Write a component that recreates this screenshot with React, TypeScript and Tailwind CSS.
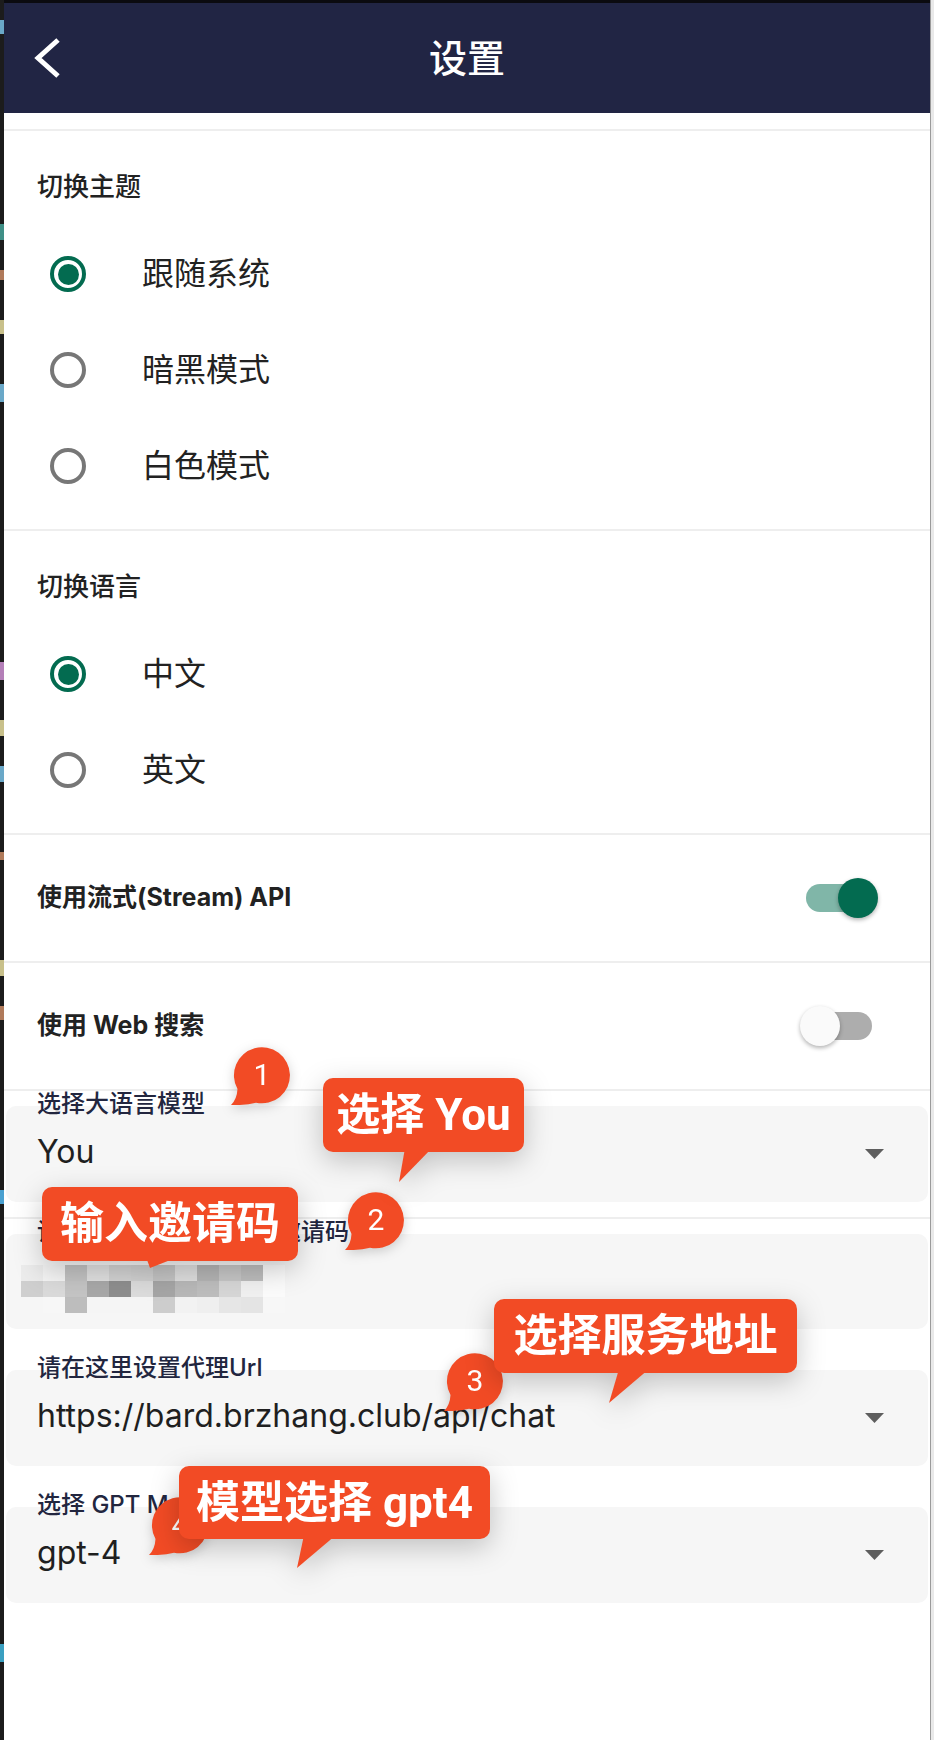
import React from "react";

function Radio({ checked }: { checked: boolean }) {
  return checked ? (
    <span className="flex h-[36px] w-[36px] shrink-0 items-center justify-center rounded-full border-[4.5px] border-[#036b50]">
      <span className="h-[21px] w-[21px] rounded-full bg-[#036b50]" />
    </span>
  ) : (
    <span className="h-[36px] w-[36px] shrink-0 rounded-full border-[4px] border-[#777777]" />
  );
}

function Sep() {
  return <div className="h-[2px] bg-[#eeeeee]" />;
}

function RadioSection({
  title,
  options,
}: {
  title: string;
  options: { label: string; checked: boolean }[];
}) {
  return (
    <section className="pt-[38px] pb-[15px]">
      <h2 className="h-[36px] pl-[33px] text-[26px] font-medium leading-[36px] text-[#222222]">
        {title}
      </h2>
      <div className="mt-[21px]">
        {options.map((o) => (
          <div key={o.label} className="flex h-[96px] items-center pl-[46px]">
            <Radio checked={o.checked} />
            <span className="ml-[56px] text-[32px] leading-none text-[#222222]">{o.label}</span>
          </div>
        ))}
      </div>
    </section>
  );
}

function Toggle({ on }: { on: boolean }) {
  return (
    <span
      className={`relative block h-[28px] w-[66px] rounded-full ${on ? "bg-[#80b6a8]" : "bg-[#adadad]"}`}
    >
      <span
        className={`absolute top-[-6px] h-[40px] w-[40px] rounded-full shadow-[0_2px_4px_rgba(0,0,0,0.3)] ${
          on ? "left-[32px] bg-[#036b50]" : "left-[-6px] bg-[#fafafa]"
        }`}
      />
    </span>
  );
}

function Arrow() {
  return (
    <svg width="19" height="10" viewBox="0 0 19 10" className="shrink-0">
      <polygon points="0,0 19,0 9.5,10" fill="#5e5e5e" />
    </svg>
  );
}

function FieldLabel({ children, className }: { children: React.ReactNode; className: string }) {
  return (
    <div
      className={`relative z-10 h-[26px] whitespace-nowrap pl-[33px] text-[24px] font-medium leading-[26px] text-[#22263f] ${className}`}
    >
      {children}
    </div>
  );
}

function SelectBox({ value }: { value: string }) {
  return (
    <div className="relative mx-[2px] -mt-[11px] flex h-[96px] items-center justify-between rounded-[10px] bg-[#f6f6f6] pl-[31px] pr-[44px]">
      <span className="pb-[4px] text-[32px] leading-none text-[#1f1f1f]">{value}</span>
      <Arrow />
    </div>
  );
}

const mosaic: string[][] = [
  ["bg-[#ececec]", "bg-[#f4f4f4]", "bg-[#c2c2c2]", "bg-[#e0e0e0]", "bg-[#d2d2d2]", "bg-[#d0d0d0]", "bg-[#c4c4c4]", "bg-[#dedede]", "bg-[#b4b4b4]", "bg-[#c6c6c6]", "bg-[#bdbdbd]", "bg-[#fbfbfb]"],
  ["bg-[#cfcfcf]", "bg-[#dadada]", "bg-[#c4c4c4]", "bg-[#a8a8a8]", "bg-[#8e8e8e]", "bg-[#dcdcdc]", "bg-[#a6a6a6]", "bg-[#b8b8b8]", "bg-[#bdbdbd]", "bg-[#d6d6d6]", "bg-[#f0f0f0]", "bg-[#fbfbfb]"],
  ["bg-[#f6f6f6]", "bg-[#f7f7f7]", "bg-[#bdbdbd]", "bg-[#f5f5f5]", "bg-[#f5f5f5]", "bg-[#f5f5f5]", "bg-[#cdcdcd]", "bg-[#f2f2f2]", "bg-[#efefef]", "bg-[#e6e6e6]", "bg-[#e4e4e4]", "bg-[#f7f7f7]"],
];

function Badge({ n, className }: { n: string; className: string }) {
  return (
    <div className={`absolute z-20 h-[58px] w-[60px] drop-shadow-[0_3px_6px_rgba(0,0,0,0.18)] ${className}`}>
      <svg width="60" height="58" viewBox="0 0 60 58" className="absolute left-0 top-0">
        <path
          d="M 7.5 42 Q 7 52 1 58 Q 16 58.5 26 55.7 A 28 28 0 1 0 7.5 42 Z"
          fill="#f24b25"
        />
      </svg>
      <div className="absolute left-[4px] top-0 flex h-[56px] w-[56px] items-center justify-center font-['Roboto',sans-serif] text-[30px] leading-none text-white">
        {n}
      </div>
    </div>
  );
}

function Callout({
  text,
  className,
  w,
  h,
  tail,
}: {
  text: string;
  className: string;
  w: number;
  h: number;
  tail: string;
}) {
  return (
    <div className={`absolute z-30 drop-shadow-[0_8px_14px_rgba(0,0,0,0.22)] ${className}`}>
      <svg width={w} height={h} viewBox={`0 0 ${w} ${h}`} className="absolute left-0 top-0 overflow-visible">
        <polygon points={tail} fill="#f24b25" />
      </svg>
      <div className="relative flex h-full w-full items-center justify-center rounded-[10px] bg-[#f24b25] font-['Roboto','Noto_Sans_CJK_SC',sans-serif] text-[44px] font-bold leading-none text-white">
        {text}
      </div>
    </div>
  );
}

export default function App() {
  return (
    <div className="relative flex h-[1740px] w-[934px] overflow-hidden bg-white font-['Inter','Noto_Sans_CJK_SC',sans-serif]">
      {/* left editor strip */}
      <div className="flex w-[4px] shrink-0 flex-col bg-[#1c1c1c]">
        <div className="mt-[20px] h-[14px] bg-[#6aa8c8]" />
        <div className="mt-[190px] h-[16px] bg-[#3f8f86]" />
        <div className="mt-[30px] h-[10px] bg-[#b07a5a]" />
        <div className="mt-[40px] h-[14px] bg-[#c8c08a]" />
        <div className="mt-[50px] h-[18px] bg-[#6aa8c8]" />
        <div className="mt-[260px] h-[18px] bg-[#b47fb8]" />
        <div className="mt-[40px] h-[16px] bg-[#c8c08a]" />
        <div className="mt-[30px] h-[16px] bg-[#6aa8c8]" />
        <div className="mt-[70px] h-[8px] bg-[#b07a5a]" />
        <div className="mt-[100px] h-[16px] bg-[#c8c08a]" />
        <div className="mt-[30px] h-[14px] bg-[#b07a5a]" />
        <div className="mt-[170px] h-[14px] bg-[#4aa0d0]" />
        <div className="mt-[440px] h-[18px] bg-[#3a9fc0]" />
      </div>

      {/* main column */}
      <div className="flex min-w-0 flex-1 flex-col">
        <div className="h-[3px] bg-[#0b0b10]" />
        <header className="grid h-[110px] grid-cols-[1fr_auto_1fr] items-center bg-[#212544]">
          <div className="pl-[29px]">
            <svg width="28" height="42" viewBox="0 0 28 42">
              <polyline points="25,3 5,21 25,39" fill="none" stroke="#ffffff" strokeWidth="5" />
            </svg>
          </div>
          <h1 className="text-[38px] font-medium leading-none text-white">设置</h1>
          <div />
        </header>
        <div className="h-[16px]" />
        <Sep />
        <RadioSection
          title="切换主题"
          options={[
            { label: "跟随系统", checked: true },
            { label: "暗黑模式", checked: false },
            { label: "白色模式", checked: false },
          ]}
        />
        <Sep />
        <RadioSection
          title="切换语言"
          options={[
            { label: "中文", checked: true },
            { label: "英文", checked: false },
          ]}
        />
        <Sep />
        <div className="flex h-[126px] items-center justify-between pl-[33px] pr-[58px]">
          <span className="text-[25px] font-bold text-[#222222]">使用流式(Stream) API</span>
          <Toggle on />
        </div>
        <Sep />
        <div className="flex h-[126px] items-center justify-between pl-[33px] pr-[58px]">
          <span className="text-[25px] font-bold text-[#222222]">使用 Web 搜索</span>
          <Toggle on={false} />
        </div>
        <Sep />

        <FieldLabel className="">选择大语言模型</FieldLabel>
        <SelectBox value="You" />

        <div className="mt-[15px]">
          <Sep />
        </div>
        <FieldLabel className="">请在这里输入你的访问邀请码</FieldLabel>
        <div className="relative mx-[2px] -mt-[11px] h-[95px] rounded-[10px] bg-[#f6f6f6] pl-[15px] pt-[31px]">
          <div className="grid w-[264px] grid-cols-12">
            {mosaic.map((row, r) =>
              row.map((c, i) => <div key={`${r}-${i}`} className={`h-[16px] ${c}`} />)
            )}
          </div>
        </div>

        <FieldLabel className="mt-[26px]">请在这里设置代理Url</FieldLabel>
        <SelectBox value="https://bard.brzhang.club/api/chat" />

        <FieldLabel className="mt-[26px]">选择 GPT Model</FieldLabel>
        <SelectBox value="gpt-4" />
      </div>

      {/* right window edge */}
      <div className="w-[4px] shrink-0 border-l border-[#9a9a9a] bg-[#e9e9e9]" />

      {/* annotation overlay */}
      <Badge n="1" className="left-[230px] top-[1047px]" />
      <Badge n="2" className="left-[344px] top-[1192px]" />
      <Badge n="3" className="left-[443px] top-[1353px]" />
      <Badge n="4" className="left-[148px] top-[1497px]" />

      <Callout
        text="选择 You"
        className="left-[323px] top-[1078px] h-[74px] w-[201px]"
        w={201}
        h={74}
        tail="82,70 109,70 76,104"
      />
      <Callout
        text="输入邀请码"
        className="left-[42px] top-[1187px] h-[74px] w-[256px]"
        w={256}
        h={74}
        tail="104,70 136,70 108,81"
      />
      <Callout
        text="选择服务地址"
        className="left-[494px] top-[1299px] h-[74px] w-[303px]"
        w={303}
        h={74}
        tail="125,70 155,70 115,104"
      />
      <Callout
        text="模型选择 gpt4"
        className="left-[179px] top-[1466px] h-[73px] w-[311px]"
        w={311}
        h={73}
        tail="125,69 157,69 118,102"
      />
    </div>
  );
}
